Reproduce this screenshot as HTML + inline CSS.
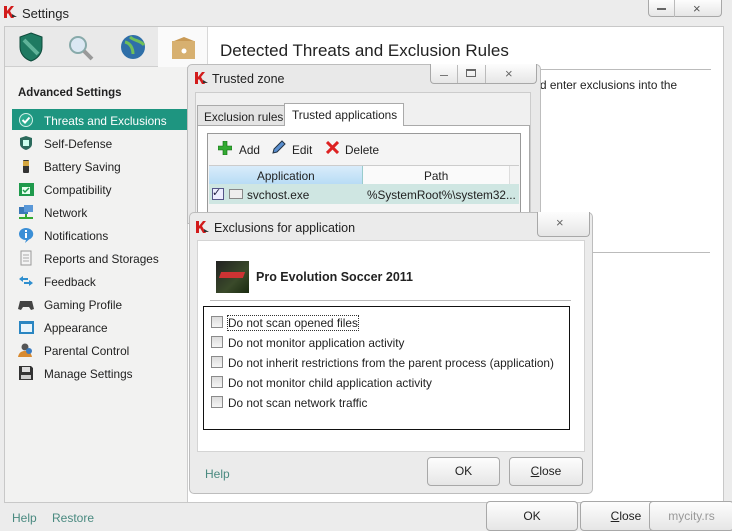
<!DOCTYPE html>
<html><head><meta charset="utf-8"><style>
*{margin:0;padding:0;box-sizing:border-box}
body{width:732px;height:530px;overflow:hidden;background:#ececec;font-family:"Liberation Sans",sans-serif;font-size:11.8px;color:#222;position:relative}
.a{position:absolute}
.t{position:absolute;white-space:nowrap;margin-top:1px}
.btn{position:absolute;border:1px solid #a8a8a8;border-radius:4px;background:linear-gradient(#fdfdfd,#e6e6e6);text-align:center;font-size:12px;color:#222}
.kl{position:absolute;width:14px;height:12px}
.cb{position:absolute;width:12px;height:12px;border:1px solid #8a8a8a;background:linear-gradient(#dcdcdc,#f4f4f4)}
.ic{position:absolute;width:16px;height:16px;left:18px}
</style></head><body>
<svg class="kl" style="left:4px;top:6px" viewBox="0 0 14 12"><path d="M0 0h3v5l4-5h3l-4 5 4 7H7L4 7 3 8v4H0z" fill="#d21b1b"/><path d="M8 8l5 3h-5z" fill="#333"/></svg>
<div class="t" style="left:22px;top:5px;font-size:13px">Settings</div>
<div class="btn" style="left:648px;top:0;width:74px;height:17px;border-top:none;border-radius:0 0 4px 4px"></div>
<div class="a" style="left:674px;top:0;width:1px;height:17px;background:#bbb"></div>
<div class="a" style="left:657px;top:8px;width:9px;height:2px;background:#666"></div>
<div class="t" style="left:693px;top:0;font-size:13px;color:#555">×</div>
<div class="a" style="left:4px;top:26px;width:720px;height:477px;border:1px solid #c8c8c8;background:#fff"></div>
<div class="a" style="left:5px;top:27px;width:153px;height:40px;background:#e9e9e9;border-bottom:1px solid #cfcfcf"></div>
<div class="a" style="left:158px;top:27px;width:50px;height:40px;background:#fafafa;border-right:1px solid #d8d8d8"></div>
<div class="a" style="left:5px;top:67px;width:183px;height:435px;background:#f2f2f1;border-right:1px solid #ccc"></div>
<svg class="a" style="left:18px;top:32px" width="26" height="30" viewBox="0 0 26 30"><path d="M13 1l11 4v10c0 7-5 12-11 14C7 27 2 22 2 15V5z" fill="#1f7a62" stroke="#0e4a3b"/><path d="M6 8l14 14" stroke="#5fb39a" stroke-width="4"/></svg>
<svg class="a" style="left:67px;top:34px" width="28" height="28"><circle cx="11" cy="11" r="8" fill="#dbe8f3" stroke="#8aa" stroke-width="2"/><path d="M17 17l8 8" stroke="#999" stroke-width="4"/></svg>
<svg class="a" style="left:120px;top:34px" width="26" height="26"><circle cx="13" cy="13" r="12" fill="#2f6fa8"/><path d="M5 8c5 1 8 6 8 12M10 3c4 4 10 3 14 8" stroke="#6fbf5a" stroke-width="3" fill="none"/></svg>
<svg class="a" style="left:171px;top:36px" width="26" height="24"><rect x="1" y="5" width="23" height="18" fill="#d7b070"/><path d="M3 5l10-4 10 4" fill="#c99a55"/><circle cx="13" cy="15" r="2.5" fill="#fff"/></svg>
<div class="t" style="left:220px;top:40px;font-size:17px;color:#222">Detected Threats and Exclusion Rules</div>
<div class="a" style="left:540px;top:69px;width:171px;height:1px;background:#bbb"></div>
<div class="t" style="left:540px;top:77px">d enter exclusions into the</div>
<div class="a" style="left:590px;top:252px;width:120px;height:1px;background:#bbb"></div>
<div class="t" style="left:18px;top:86px;font-weight:bold;font-size:11.5px">Advanced Settings</div>
<div class="a" style="left:12px;top:109px;width:175px;height:21px;background:#1e9580"></div>
<svg class="ic" style="top:112px" viewBox="0 0 16 16"><circle cx="8" cy="8" r="6.5" fill="#2aa98e" stroke="#cfeee6"/><path d="M4.5 8l2.5 2.5 4.5-5" stroke="#fff" stroke-width="2" fill="none"/></svg>
<div class="t" style="left:44px;top:113px;color:#fff">Threats and Exclusions</div>
<svg class="ic" style="top:135px" viewBox="0 0 16 16"><path d="M8 1l6 2v6c0 3-3 5-6 6-3-1-6-3-6-6V3z" fill="#2b6a5c"/><rect x="5" y="5" width="6" height="6" fill="#cfe"/></svg>
<div class="t" style="left:44px;top:136px">Self-Defense</div>
<svg class="ic" style="top:158px" viewBox="0 0 16 16"><rect x="5" y="2" width="6" height="13" rx="1" fill="#333"/><rect x="5" y="3" width="6" height="5" fill="#d4a640"/></svg>
<div class="t" style="left:44px;top:159px">Battery Saving</div>
<svg class="ic" style="top:181px" viewBox="0 0 16 16"><rect x="1" y="2" width="15" height="13" fill="#1f9a4c"/><rect x="4" y="6" width="8" height="7" fill="#e8fff0"/><path d="M5 9l2 2 4-4" stroke="#1f9a4c" stroke-width="1.5" fill="none"/></svg>
<div class="t" style="left:44px;top:182px">Compatibility</div>
<svg class="ic" style="top:204px" viewBox="0 0 16 16"><rect x="1" y="3" width="9" height="7" fill="#3a78b8"/><rect x="6" y="1" width="9" height="7" fill="#5a98d8"/><path d="M1 14h14M8 10v4" stroke="#3a3" stroke-width="2"/></svg>
<div class="t" style="left:44px;top:205px">Network</div>
<svg class="ic" style="top:227px" viewBox="0 0 16 16"><path d="M8 1a7 6 0 100 12l-1 3 4-3.5A7 6 0 008 1z" fill="#3b8fd6"/><rect x="7" y="6" width="2" height="5" fill="#fff"/><rect x="7" y="3" width="2" height="2" fill="#fff"/></svg>
<div class="t" style="left:44px;top:228px">Notifications</div>
<svg class="ic" style="top:250px" viewBox="0 0 16 16"><rect x="3" y="1" width="10" height="14" fill="#f4f4f4" stroke="#999"/><path d="M5 5h6M5 8h6M5 11h6" stroke="#aaa"/></svg>
<div class="t" style="left:44px;top:251px">Reports and Storages</div>
<svg class="ic" style="top:273px" viewBox="0 0 16 16"><path d="M1 6l4-3v2h5v2H5v2zM15 10l-4 3v-2H6V9h5V7z" fill="#2f8fcf"/></svg>
<div class="t" style="left:44px;top:274px">Feedback</div>
<svg class="ic" style="top:296px" viewBox="0 0 16 16"><path d="M2 5h12l2 8-3 1-2-3H5l-2 3-3-1z" fill="#444"/></svg>
<div class="t" style="left:44px;top:297px">Gaming Profile</div>
<svg class="ic" style="top:319px" viewBox="0 0 16 16"><rect x="1" y="2" width="15" height="13" fill="#2a86c2"/><rect x="3" y="5" width="11" height="8" fill="#e8f4fb"/></svg>
<div class="t" style="left:44px;top:320px">Appearance</div>
<svg class="ic" style="top:342px" viewBox="0 0 16 16"><circle cx="7" cy="5" r="3.5" fill="#555"/><path d="M0 15c1-5 4-6 7-6s6 1 7 6z" fill="#d88a30"/><circle cx="11" cy="9" r="3" fill="#3a7bc0"/></svg>
<div class="t" style="left:44px;top:343px">Parental Control</div>
<svg class="ic" style="top:365px" viewBox="0 0 16 16"><path d="M1 1h12l2 2v12H1z" fill="#333"/><rect x="4" y="2" width="8" height="5" fill="#ddd"/><rect x="3" y="10" width="10" height="4" fill="#ccc"/></svg>
<div class="t" style="left:44px;top:366px">Manage Settings</div>
<div class="t" style="left:12px;top:510px;color:#4a8a80;font-size:12px">Help</div>
<div class="t" style="left:52px;top:510px;color:#4a8a80;font-size:12px">Restore</div>
<div class="btn" style="left:486px;top:501px;width:92px;height:30px;line-height:28px">OK</div>
<div class="btn" style="left:580px;top:501px;width:92px;height:30px;line-height:28px"><u>C</u>lose</div>
<div class="btn" style="left:649px;top:501px;width:85px;height:30px;line-height:28px;color:#999">mycity.rs</div>
<div class="a" style="left:187px;top:64px;width:354px;height:160px;background:#e9e9e9;border:1px solid #bdbdbd;border-radius:5px 5px 0 0"></div>
<svg class="kl" style="left:195px;top:72px" viewBox="0 0 14 12"><path d="M0 0h3v5l4-5h3l-4 5 4 7H7L4 7 3 8v4H0z" fill="#d21b1b"/><path d="M8 8l5 3h-5z" fill="#333"/></svg>
<div class="t" style="left:212px;top:71px;font-size:12.5px">Trusted zone</div>
<div class="btn" style="left:430px;top:64px;width:107px;height:20px;border-top:none;border-radius:0 0 4px 4px"></div>
<div class="a" style="left:457px;top:65px;width:1px;height:18px;background:#bbb"></div>
<div class="a" style="left:485px;top:65px;width:1px;height:18px;background:#bbb"></div>
<div class="a" style="left:440px;top:75px;width:8px;height:1px;background:#777"></div>
<div class="a" style="left:466px;top:69px;width:10px;height:8px;border:1px solid #666;border-top-width:2px"></div>
<div class="t" style="left:505px;top:65px;font-size:13px;color:#666">×</div>
<div class="a" style="left:195px;top:92px;width:336px;height:130px;background:#f0f0f0;border:1px solid #ccc"></div>
<div class="a" style="left:197px;top:125px;width:333px;height:97px;background:#fff;border:1px solid #aaa"></div>
<div class="a" style="left:197px;top:105px;width:88px;height:21px;background:#e4e4e4;border:1px solid #aaa"></div>
<div class="t" style="left:204px;top:109px">Exclusion rules</div>
<div class="a" style="left:284px;top:103px;width:120px;height:23px;background:#fff;border:1px solid #aaa;border-bottom:none"></div>
<div class="t" style="left:292px;top:107px">Trusted applications</div>
<div class="a" style="left:207px;top:133px;width:314px;height:85px;border:1px solid #999;background:#f4f4f4"></div>
<svg class="a" style="left:218px;top:141px" width="14" height="14"><path d="M5 0h4v5h5v4H9v5H5V9H0V5h5z" fill="#3a3" stroke="#161" stroke-width=".6"/></svg>
<div class="t" style="left:239px;top:142px">Add</div>
<svg class="a" style="left:272px;top:140px" width="14" height="14"><path d="M1 13l1-4 8-8 3 3-8 8z" fill="#5a8fd0" stroke="#234"/></svg>
<div class="t" style="left:292px;top:142px">Edit</div>
<svg class="a" style="left:326px;top:141px" width="13" height="13"><path d="M1 1l11 11M12 1L1 12" stroke="#d22" stroke-width="3"/></svg>
<div class="t" style="left:345px;top:142px">Delete</div>
<div class="a" style="left:209px;top:165px;width:310px;height:1px;background:#ccc"></div>
<div class="a" style="left:209px;top:166px;width:154px;height:18px;background:linear-gradient(#d9ecfa,#b8dcf5);border-right:1px solid #9cc"></div>
<div class="t" style="left:257px;top:168px">Application</div>
<div class="a" style="left:363px;top:166px;width:147px;height:18px;background:#fafafa;border-right:1px solid #ddd"></div>
<div class="t" style="left:424px;top:168px">Path</div>
<div class="a" style="left:209px;top:184px;width:310px;height:20px;background:#cfe6e2"></div>
<div class="cb" style="left:212px;top:188px;background:#eef;border-color:#558"></div>
<div class="t" style="left:212px;top:185px;font-size:11px;color:#224">✓</div>
<div class="a" style="left:229px;top:189px;width:14px;height:10px;border:1px solid #888;background:#eee"></div>
<div class="t" style="left:247px;top:187px">svchost.exe</div>
<div class="t" style="left:367px;top:187px">%SystemRoot%\system32...</div>
<div class="a" style="left:189px;top:212px;width:404px;height:282px;background:#ebebeb;border:1px solid #bdbdbd;border-radius:5px"></div>
<svg class="kl" style="left:196px;top:221px" viewBox="0 0 14 12"><path d="M0 0h3v5l4-5h3l-4 5 4 7H7L4 7 3 8v4H0z" fill="#d21b1b"/><path d="M8 8l5 3h-5z" fill="#333"/></svg>
<div class="t" style="left:214px;top:220px;font-size:12.5px">Exclusions for application</div>
<div class="btn" style="left:537px;top:212px;width:53px;height:25px;border-top:none;border-radius:0 0 4px 4px"></div>
<div class="t" style="left:556px;top:214px;font-size:13px;color:#666">×</div>
<div class="a" style="left:197px;top:240px;width:388px;height:212px;background:#fff;border:1px solid #d4d4d4"></div>
<div class="a" style="left:216px;top:261px;width:33px;height:32px;background:linear-gradient(135deg,#222,#3a4a2a 60%,#1a2a10)"></div>
<div class="a" style="left:220px;top:272px;width:24px;height:6px;background:#c33;transform:skewX(-20deg)"></div>
<div class="t" style="left:256px;top:269px;font-weight:bold;font-size:12.5px">Pro Evolution Soccer 2011</div>
<div class="a" style="left:210px;top:300px;width:361px;height:1px;background:#bbb"></div>
<div class="a" style="left:203px;top:306px;width:367px;height:124px;border:1px solid #111"></div>
<div class="cb" style="left:211px;top:316px"></div>
<div class="t" style="left:228px;top:315px;outline:1px dotted #333">Do not scan opened files</div>
<div class="cb" style="left:211px;top:336px"></div>
<div class="t" style="left:228px;top:335px">Do not monitor application activity</div>
<div class="cb" style="left:211px;top:356px"></div>
<div class="t" style="left:228px;top:355px">Do not inherit restrictions from the parent process (application)</div>
<div class="cb" style="left:211px;top:376px"></div>
<div class="t" style="left:228px;top:375px">Do not monitor child application activity</div>
<div class="cb" style="left:211px;top:396px"></div>
<div class="t" style="left:228px;top:395px">Do not scan network traffic</div>
<div class="t" style="left:205px;top:466px;color:#4a8a80;font-size:12px">Help</div>
<div class="btn" style="left:427px;top:457px;width:73px;height:29px;line-height:27px">OK</div>
<div class="btn" style="left:509px;top:457px;width:74px;height:29px;line-height:27px"><u>C</u>lose</div>
</body></html>
